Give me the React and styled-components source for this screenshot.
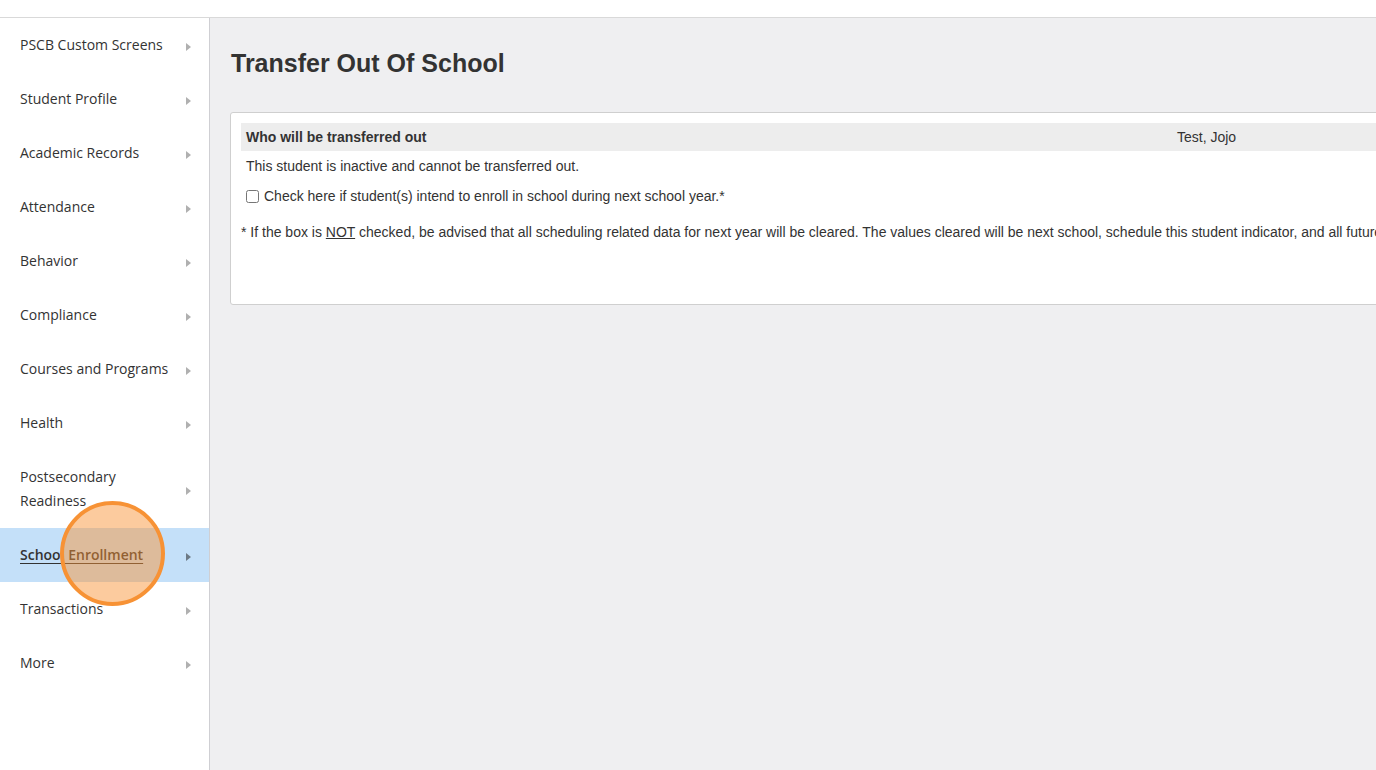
import React from "react";
import styled, { createGlobalStyle } from "styled-components";

const Global = createGlobalStyle`
  html, body { margin: 0; padding: 0; height: 100%; }
  body { background: #fff; overflow: hidden; }
  #root { height: 100%; }
`;

const Page = styled.div`
  width: 1376px;
  height: 770px;
  display: flex;
  flex-direction: column;
  overflow: hidden;
`;

const TopBar = styled.div`
  height: 17px;
  background: #fff;
  border-bottom: 1px solid #d9d9d9;
  flex: none;
`;

const Body = styled.div`
  flex: 1;
  display: flex;
  min-height: 0;
`;

const Sidebar = styled.nav`
  width: 209px;
  flex: none;
  background: #fff;
  border-right: 1px solid #cfcfd3;
  position: relative;
`;

const NavItem = styled.div`
  display: flex;
  align-items: center;
  justify-content: space-between;
  min-height: ${(p) => (p.$tall ? 78 : 54)}px;
  padding: 0 18px 0 20px;
  box-sizing: border-box;
  background: ${(p) => (p.$active ? "#c4e0f9" : "transparent")};
  font-family: "Open Sans", sans-serif;
  font-size: 14px;
  line-height: 24px;
  color: #333;
`;

const NavLabel = styled.span`
  max-width: 156px;
  font-weight: ${(p) => (p.$active ? 600 : 400)};
  text-decoration: ${(p) => (p.$active ? "underline" : "none")};
  text-underline-offset: 3px;
`;

const Arrow = styled.span`
  flex: none;
  width: 0;
  height: 0;
  border-top: 4.5px solid transparent;
  border-bottom: 4.5px solid transparent;
  border-left: 5px solid ${(p) => (p.$active ? "#6d7a86" : "#b0b0b0")};
  margin-top: 4px;
`;

const Highlight = styled.div`
  position: absolute;
  left: 60px;
  top: 483px;
  width: 105px;
  height: 105px;
  box-sizing: border-box;
  border-radius: 50%;
  border: 4px solid #f79235;
  background: rgba(248, 146, 52, 0.48);
  pointer-events: none;
`;

const Main = styled.main`
  flex: 1;
  background: #efeff1;
  overflow: hidden;
  padding: 30px 0 0 20px;
  min-width: 0;
`;

const Title = styled.h1`
  margin: 0 0 34px 1px;
  font-family: "Liberation Sans", Arial, sans-serif;
  font-size: 25px;
  font-weight: bold;
  color: #333;
  line-height: 30px;
`;

const Card = styled.section`
  width: 1400px;
  height: 193px;
  box-sizing: border-box;
  background: #fff;
  border: 1px solid #cfcfcf;
  border-radius: 3px;
  padding: 10px 10px;
  font-family: "Liberation Sans", Arial, sans-serif;
  font-size: 14px;
  color: #333;
`;

const HeadRow = styled.div`
  display: grid;
  grid-template-columns: 931px 1fr;
  background: #ededed;
  height: 28px;
  align-items: center;
`;

const Cell = styled.div`
  padding: 0 5px;
  font-weight: ${(p) => (p.$bold ? "bold" : "normal")};
`;

const Line = styled.div`
  padding: 0 5px;
  height: ${(p) => p.$h}px;
  display: flex;
  align-items: center;
  white-space: nowrap;
`;

const Check = styled.input`
  margin: 0 5px 0 0;
  width: 13px;
  height: 13px;
`;

const Note = styled.div`
  margin-top: 12px;
  white-space: nowrap;
  line-height: 16px;
`;

const U = styled.span`
  text-decoration: underline;
`;

const items = [
  "PSCB Custom Screens",
  "Student Profile",
  "Academic Records",
  "Attendance",
  "Behavior",
  "Compliance",
  "Courses and Programs",
  "Health",
  "Postsecondary Readiness",
  "School Enrollment",
  "Transactions",
  "More",
];

export default function App() {
  return (
    <Page>
      <Global />
      <TopBar />
      <Body>
        <Sidebar>
          {items.map((it) => {
            const active = it === "School Enrollment";
            const tall = it === "Postsecondary Readiness";
            return (
              <NavItem key={it} $active={active} $tall={tall}>
                <NavLabel $active={active}>{it}</NavLabel>
                <Arrow $active={active} />
              </NavItem>
            );
          })}
          <Highlight />
        </Sidebar>
        <Main>
          <Title>Transfer Out Of School</Title>
          <Card>
            <HeadRow>
              <Cell $bold>Who will be transferred out</Cell>
              <Cell>Test, Jojo</Cell>
            </HeadRow>
            <Line $h={29}>This student is inactive and cannot be transferred out.</Line>
            <Line $h={32}>
              <Check type="checkbox" />
              Check here if student(s) intend to enroll in school during next school year.*
            </Line>
            <Note>
              * If the box is <U>NOT</U> checked, be advised that all scheduling related data for next year will be cleared. The values cleared will be next school, schedule this student indicator, and all future
            </Note>
          </Card>
        </Main>
      </Body>
    </Page>
  );
}
